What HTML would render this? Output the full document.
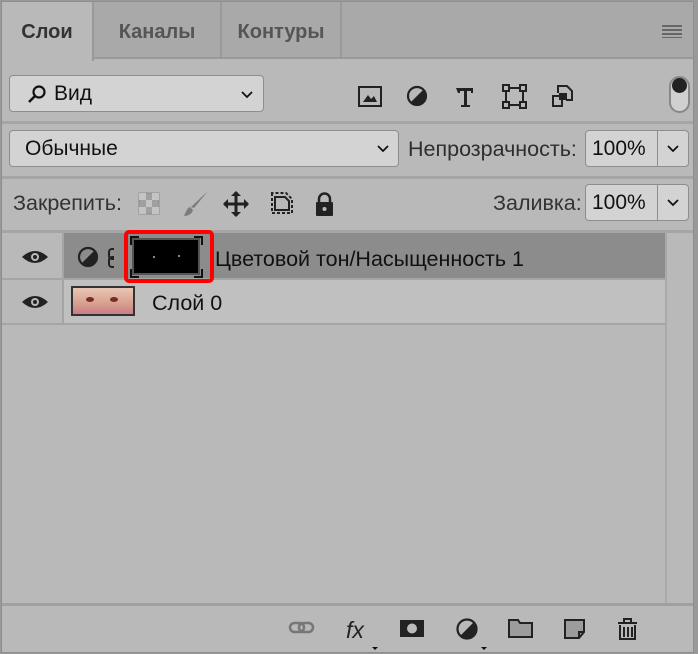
<!DOCTYPE html>
<html><head><meta charset="utf-8"><style>
*{box-sizing:border-box;margin:0;padding:0}
body{width:698px;height:654px;background:#999;font-family:"Liberation Sans",sans-serif;position:relative;overflow:hidden}
#p{position:absolute;left:1px;top:1px;width:693px;height:652px;background:#b9b9b9;border:1px solid #8e8e8e}
.a{position:absolute}
.tabbar{left:0;top:0;width:691px;height:57px;background:#a9a9a9;border-bottom:2px solid #999}
.tab{position:absolute;top:0;height:57px;font-weight:bold;font-size:20px;color:#555;line-height:60px;text-align:center;border-right:2px solid #999}
.sel{background:#b9b9b9;color:#333;height:59px}
.box{position:absolute;background:#d3d3d3;border:1px solid #8e8e8e;border-radius:4px;font-size:21px;color:#111;}
.sep{position:absolute;left:0;width:691px;height:3px;background:#a5a5a5}
.lbl{position:absolute;font-size:21.5px;color:#333}
</style></head><body>
<div id="p">
<div class="a tabbar"></div>
<div class="tab sel" style="left:0;width:92px">Слои</div>
<div class="tab" style="left:92px;width:128px">Каналы</div>
<div class="tab" style="left:220px;width:120px">Контуры</div>
<div class="a" style="left:660px;top:23px;width:20px;height:13px;background:repeating-linear-gradient(#666 0 2px,transparent 2px 4px)"></div>

<div class="box" style="left:7px;top:73px;width:255px;height:37px;line-height:36px;padding-left:44px">Вид</div>
<svg class="a" style="left:24px;top:82px" width="22" height="20"><circle cx="13" cy="8" r="5.5" fill="none" stroke="#111" stroke-width="2.2"/><path d="M9 12 3 18" stroke="#111" stroke-width="2.5"/></svg>
<svg class="a" style="left:238px;top:88px" width="14" height="10"><path d="M2 2 7 7 12 2" fill="none" stroke="#111" stroke-width="1.8"/></svg>
<svg class="a" style="left:355px;top:82px" width="220" height="26" fill="#222" stroke="#222">
<rect x="2" y="3" width="22" height="19" fill="none" stroke-width="2"/><path d="M6 18 11 11 14 15 17 12 20 18Z" stroke="none"/>
<circle cx="60" cy="12" r="9" fill="none" stroke-width="2.2"/><path d="M66.4 5.6A9 9 0 0 1 53.6 18.4Z" stroke="none"/>
<path d="M99 4h17v5h-2v-2h-4v14h3v2h-9v-2h3v-14h-4v2h-2z" stroke="none"/>
<rect x="149" y="4" width="17" height="17" fill="none" stroke-width="2"/><rect x="146" y="1" width="6" height="6" fill="#b9b9b9" stroke-width="2"/><rect x="163" y="1" width="6" height="6" fill="#b9b9b9" stroke-width="2"/><rect x="146" y="18" width="6" height="6" fill="#b9b9b9" stroke-width="2"/><rect x="163" y="18" width="6" height="6" fill="#b9b9b9" stroke-width="2"/>
<path d="M201 9V2h9l5 5v9h-6" fill="none" stroke-width="2"/><rect x="196" y="12" width="9" height="10" fill="none" stroke-width="2"/><rect x="202" y="9" width="8" height="7" stroke="none"/>
</svg>
<div class="a" style="left:667px;top:74px;width:21px;height:37px;border-radius:11px;background:#d0d0d0;border:2px solid #888"></div>
<div class="a" style="left:670px;top:76px;width:15px;height:15px;border-radius:50%;background:#222"></div>

<div class="sep" style="top:119px"></div>
<div class="box" style="left:7px;top:128px;width:390px;height:37px;line-height:36px;padding-left:15px">Обычные</div>
<svg class="a" style="left:374px;top:142px" width="14" height="10"><path d="M2 2 7 7 12 2" fill="none" stroke="#111" stroke-width="1.8"/></svg>
<div class="lbl" style="left:406px;top:135px;color:#2e2e2e">Непрозрачность:</div>
<div class="box" style="left:583px;top:128px;width:104px;height:37px;line-height:36px;padding-left:6px">100%</div>
<div class="a" style="left:655px;top:129px;width:1px;height:35px;background:#8e8e8e"></div>
<svg class="a" style="left:664px;top:142px" width="14" height="10"><path d="M2 2 7 7 12 2" fill="none" stroke="#111" stroke-width="1.8"/></svg>

<div class="sep" style="top:174px"></div>
<div class="lbl" style="left:11px;top:189px">Закрепить:</div>
<svg class="a" style="left:135px;top:188px" width="210" height="28">
<rect x="2" y="3" width="20" height="21" fill="#a0a0a0" stroke="#8a8a8a"/><rect x="2" y="3" width="7" height="7" fill="#c4c4c4"/><rect x="15" y="3" width="7" height="7" fill="#c4c4c4"/><rect x="9" y="10" width="6" height="7" fill="#c4c4c4"/><rect x="2" y="17" width="7" height="7" fill="#c4c4c4"/><rect x="15" y="17" width="7" height="7" fill="#c4c4c4"/>
<path d="M71 1 57 18 54 17Z" fill="#7c7c7c"/><path d="M53 17c-3 1-4 5-6 9 4 0 8-2 9-6z" fill="#7c7c7c"/>
<path d="M99 2v24M87 14h24" stroke="#222" stroke-width="3"/><path d="M94 6 99 1 104 6ZM94 22 99 27 104 22ZM91 9 86 14 91 19ZM107 9 112 14 107 19Z" fill="#222"/>
<path d="M135 3v20h20V9l-6-6z" fill="none" stroke="#222" stroke-width="2" stroke-dasharray="3 2"/><path d="M138 7h10l4 4v9h-14z" fill="#b9b9b9" stroke="#222" stroke-width="2"/>
<rect x="179" y="12" width="17" height="14" rx="1" fill="#222"/><path d="M182 13v-4a5.5 5.5 0 0 1 11 0v4" fill="none" stroke="#222" stroke-width="2.5"/><circle cx="187.5" cy="19" r="2" fill="#b9b9b9"/>
</svg>
<div class="lbl" style="left:491px;top:189px">Заливка:</div>
<div class="box" style="left:583px;top:182px;width:104px;height:37px;line-height:36px;padding-left:6px">100%</div>
<div class="a" style="left:655px;top:183px;width:1px;height:35px;background:#8e8e8e"></div>
<svg class="a" style="left:664px;top:196px" width="14" height="10"><path d="M2 2 7 7 12 2" fill="none" stroke="#111" stroke-width="1.8"/></svg>

<div class="sep" style="top:228px"></div>
<div class="a" style="left:0;top:231px;width:62px;height:45px;background:#b9b9b9;border-right:2px solid #a5a5a5"></div>
<div class="a" style="left:62px;top:231px;width:601px;height:45px;background:#8c8c8c"></div>
<div class="a" style="left:0;top:276px;width:663px;height:2px;background:#a5a5a5"></div>
<div class="a" style="left:0;top:278px;width:62px;height:43px;border-right:2px solid #a5a5a5"></div>
<div class="a" style="left:62px;top:278px;width:601px;height:43px;background:#c0c0c0"></div>
<div class="a" style="left:0;top:321px;width:663px;height:2px;background:#a5a5a5"></div>
<div class="a" style="left:663px;top:231px;width:2px;height:372px;background:#a9a9a9"></div>
<svg class="a" style="left:19px;top:245px" width="28" height="70"><path d="M1 10Q14-2 27 10Q14 22 1 10Z" fill="#222"/><circle cx="14" cy="10" r="4" fill="#b9b9b9"/><circle cx="14" cy="10" r="2" fill="#222"/><path d="M1 55Q14 43 27 55Q14 67 1 55Z" fill="#222"/><circle cx="14" cy="55" r="4" fill="#b9b9b9"/><circle cx="14" cy="55" r="2" fill="#222"/></svg>
<svg class="a" style="left:75px;top:244px" width="50" height="26"><circle cx="11" cy="11" r="9" fill="none" stroke="#222" stroke-width="2.2"/><path d="M17.4 4.6A9 9 0 0 1 4.6 17.4Z" fill="#222"/><path d="M37 3h-2a3 3 0 0 0-3 3v4a3 3 0 0 0 3 3h2M37 11h-2a3 3 0 0 0-3 3v4a3 3 0 0 0 3 3h2" fill="none" stroke="#222" stroke-width="2"/></svg>
<div class="a" style="left:122px;top:228px;width:90px;height:53px;border:4px solid #f00;border-radius:5px"></div>
<div class="a" style="left:130px;top:236px;width:68px;height:37px;background:#000;border:2px solid #555"></div>
<div class="a" style="left:151px;top:254px;width:2px;height:2px;background:#888"></div>
<div class="a" style="left:176px;top:253px;width:2px;height:2px;background:#888"></div>
<div class="a" style="left:128px;top:234px;width:9px;height:9px;border-left:2px solid #111;border-top:2px solid #111"></div>
<div class="a" style="left:192px;top:234px;width:9px;height:9px;border-right:2px solid #111;border-top:2px solid #111"></div>
<div class="a" style="left:128px;top:267px;width:9px;height:9px;border-left:2px solid #111;border-bottom:2px solid #111"></div>
<div class="a" style="left:192px;top:267px;width:9px;height:9px;border-right:2px solid #111;border-bottom:2px solid #111"></div>
<div class="lbl" style="left:213px;top:245px;color:#111">Цветовой тон/Насыщенность 1</div>
<div class="a" style="left:69px;top:284px;width:64px;height:30px;border:2px solid #333;background:linear-gradient(#e9c6b4,#d7a08d 60%,#c97b8a)"></div>
<div class="a" style="left:84px;top:295px;width:8px;height:5px;border-radius:50%;background:#7a2b2b"></div>
<div class="a" style="left:108px;top:295px;width:8px;height:5px;border-radius:50%;background:#7a2b2b"></div>
<div class="lbl" style="left:150px;top:289px;color:#111">Слой 0</div>

<div class="sep" style="top:601px;height:3px;background:#a0a0a0"></div>
<svg class="a" style="left:285px;top:612px" width="400" height="40">
<g fill="none" stroke="#777" stroke-width="2.5"><rect x="3" y="9" width="14" height="9" rx="4.5"/><rect x="12" y="9" width="14" height="9" rx="4.5"/></g>
<text x="59" y="24" font-family="Liberation Sans,sans-serif" font-style="italic" font-size="23" fill="#222">fx</text>
<path d="M85 33h6l-3 3z" fill="#111"/>
<rect x="113" y="6" width="24" height="17" fill="#222"/><circle cx="125" cy="14.5" r="5" fill="#bbb"/>
<circle cx="180" cy="15" r="9.5" fill="none" stroke="#222" stroke-width="2.2"/><path d="M186.7 8.3A9.5 9.5 0 0 1 173.3 21.7Z" fill="#222"/>
<path d="M194 33h6l-3 3z" fill="#111"/>
<path d="M222 6h9l2 3h12v14h-23z" fill="#9c9c9c" stroke="#222" stroke-width="2"/>
<path d="M278 6h19v12l-5 6h-14z" fill="#9c9c9c" stroke="#222" stroke-width="2"/><path d="M292 24v-6h5" fill="none" stroke="#222" stroke-width="2"/>
<path d="M331 9h19M337 9V5h7v4M333 11v14h15V11M337 13v10M341 13v10M345 13v10" fill="none" stroke="#222" stroke-width="2"/>
</svg>
</div>
</body></html>
